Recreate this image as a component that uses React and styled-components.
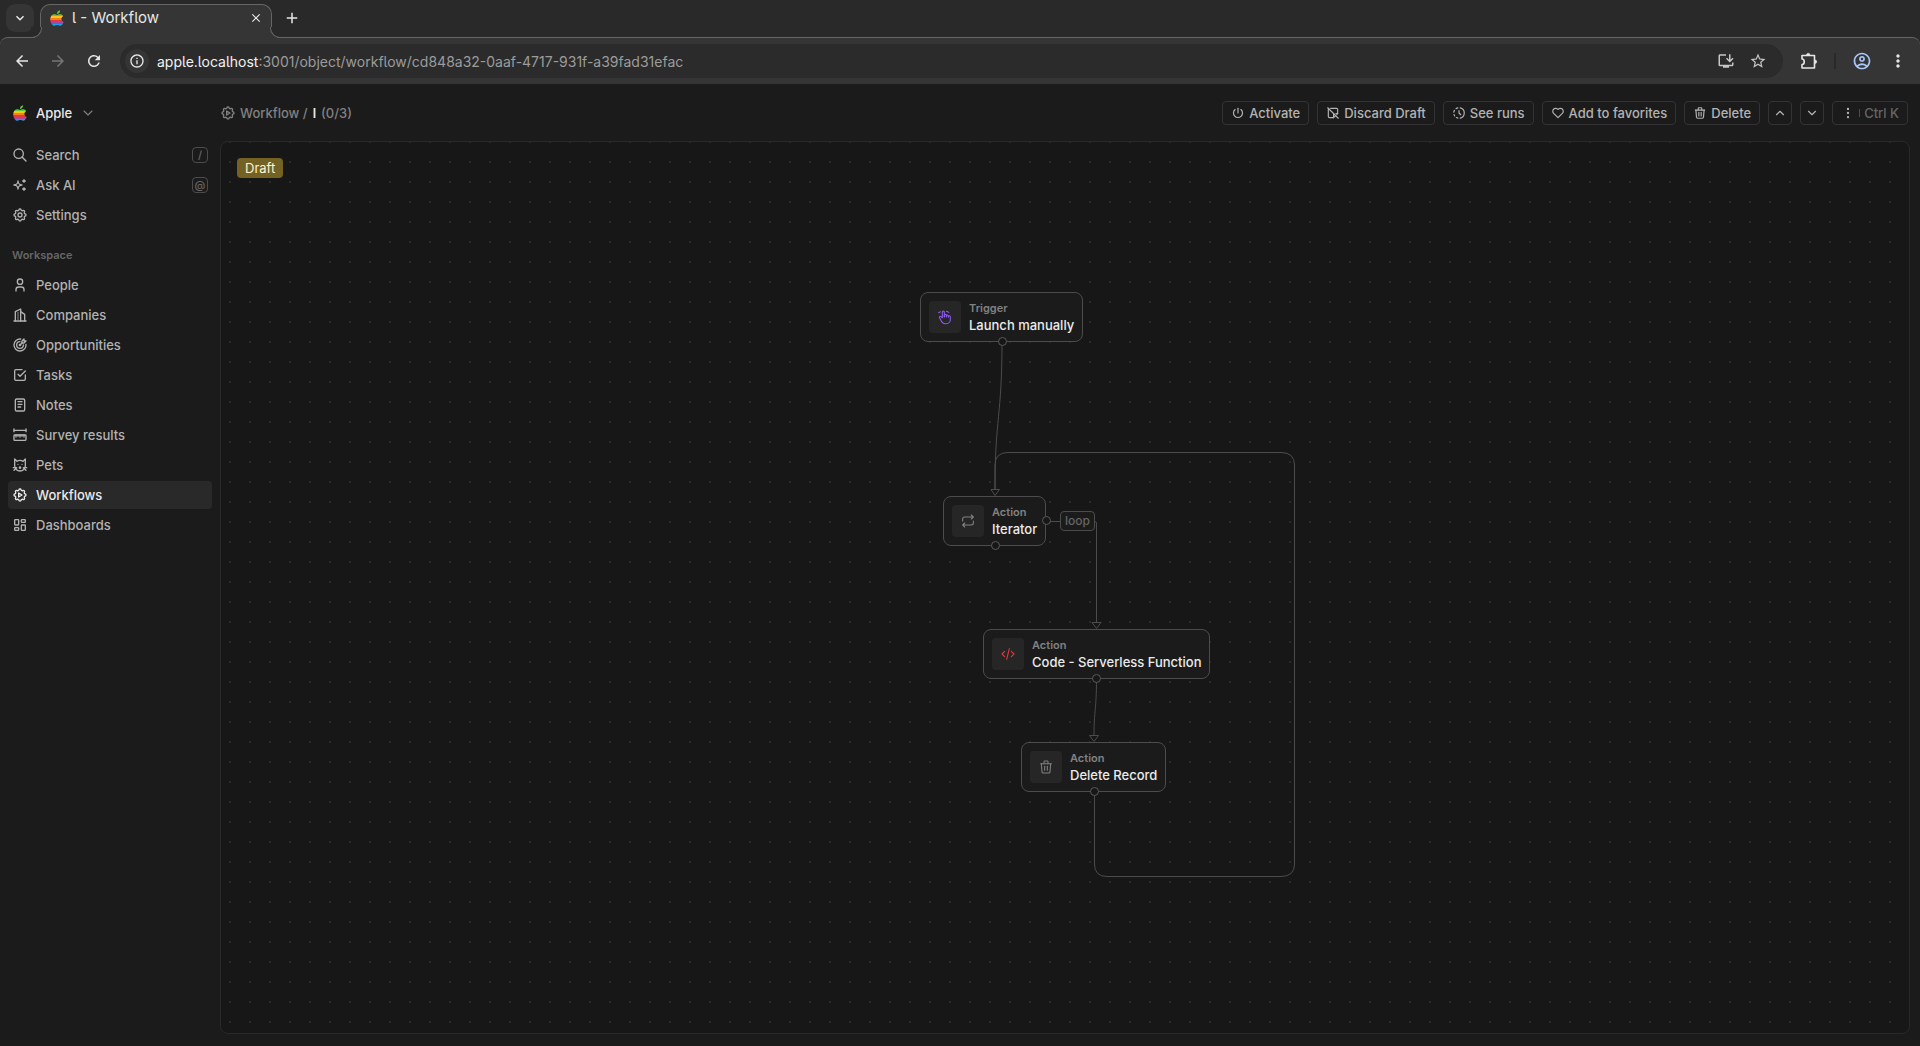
import React from 'react'
import styled, { createGlobalStyle } from 'styled-components'
import {
  TbSearch, TbSparkles, TbSettings, TbUser, TbBuildingSkyscraper, TbTargetArrow, TbCheckbox, TbNotes,
  TbRulerMeasure, TbCat, TbSettingsAutomation, TbLayoutDashboard, TbPower, TbNoteOff, TbHistoryToggle,
  TbHeart, TbTrash, TbChevronUp, TbChevronDown, TbDotsVertical, TbHandMove, TbRepeat, TbCode,
} from 'react-icons/tb'
import {
  MdArrowBack, MdArrowForward, MdRefresh, MdInfoOutline, MdOutlineInstallDesktop, MdStarOutline,
  MdOutlineAccountCircle, MdMoreVert, MdClose, MdAdd, MdKeyboardArrowDown,
} from 'react-icons/md'

const GlobalStyle = createGlobalStyle`
  * {
    box-sizing: border-box;
  }
  body {
    margin: 0;
    background-color: #1b1b1b;
    font-family: Inter, sans-serif;
    color: #b3b3b3;
  }
  button {
    font-family: inherit;
    cursor: pointer;
  }
  svg {
    display: block;
    flex-shrink: 0;
  }
`

const Window = styled.div`
  min-height: 100vh;
  display: flex;
  flex-direction: column;
`

/* browser chrome */
const Chrome = styled.div`
  background-color: #292929;
`

const TabStrip = styled.div`
  display: flex;
  height: 37px;
  padding: 4px 6px 0;
`

const TabSearch = styled.button`
  width: 28px;
  height: 28px;
  margin-right: 6px;
  display: flex;
  align-items: center;
  justify-content: center;
  border: none;
  border-radius: 9px;
  background-color: #353535;
  color: #eee;
`

const Tab = styled.div`
  position: relative;
  width: 232px;
  height: 34px;
  display: flex;
  align-items: center;
  gap: 7px;
  padding: 0 8px 8px;
  background-color: #353535;
  border: 1px solid #666;
  border-bottom: none;
  border-radius: 10px 10px 0 0;
  color: #e6e6e6;
  font-size: 15px;
  font-feature-settings: "cv05";

  &::before,
  &::after {
    content: "";
    position: absolute;
    bottom: 0;
    width: 10px;
    height: 10px;
    background-color: #292929;
    border-bottom: 1px solid #666;
  }
  &::before {
    left: -10px;
    border-right: 1px solid #666;
    border-bottom-right-radius: 10px;
    box-shadow: 4px 4px 0 #353535;
    clip-path: inset(0 -1px 0 0);
  }
  &::after {
    right: -10px;
    border-left: 1px solid #666;
    border-bottom-left-radius: 10px;
    box-shadow: -4px 4px 0 #353535;
    clip-path: inset(0 0 0 -1px);
  }
`

const TabTitle = styled.span`
  flex: 1;
`

const PlainButton = styled.button`
  display: flex;
  align-items: center;
  justify-content: center;
  padding: 0;
  border: none;
  background: none;
  color: ${(props) => props.$color || '#e6e6e6'};
`

const NewTab = styled(PlainButton)`
  width: 28px;
  height: 28px;
  margin-left: 6px;
`

const Toolbar = styled.div`
  display: flex;
  align-items: center;
  height: 47px;
  padding: 0 12px 0 13px;
  border-top: 1px solid #666;
  border-radius: 8px 8px 0 0;
  background-color: #353535;
`

const NavButtons = styled.div`
  display: flex;
  gap: 18px;
  width: 107px;
`

const AddressBar = styled.div`
  flex: 1;
  display: flex;
  align-items: center;
  gap: 8px;
  height: 34px;
  padding: 0 16px 0 5px;
  border-radius: 17px;
  background-color: #2b2b2b;
`

const SiteInfo = styled(PlainButton)`
  width: 24px;
  height: 24px;
  border-radius: 12px;
  background-color: #353535;
`

const UrlText = styled.label`
  flex: 1;
  display: flex;
  align-items: center;
  color: #f2f2f2;
  font-size: 14px;
  font-feature-settings: "cv05";
`

const Url = styled.input`
  flex: 1;
  min-width: 0;
  padding: 0;
  border: none;
  outline: none;
  background: none;
  color: #9c9c9c;
  font: inherit;
  font-feature-settings: "cv05";
`

const PageActions = styled.div`
  display: flex;
  gap: 14px;
`

const ToolbarEnd = styled.div`
  display: flex;
  align-items: center;
  margin-left: 17px;
`

const Separator = styled.div`
  width: 2px;
  height: 16px;
  margin: 0 16px;
  background-color: #292929;
`

const MenuButton = styled(PlainButton)`
  width: 20px;
  margin-left: 16px;
`

/* app */
const Layout = styled.div`
  flex: 1;
  display: flex;
`

const Sidebar = styled.nav`
  width: 204px;
  margin: 0 8px;
  padding-top: 15px;
`

const WorkspaceButton = styled.button`
  display: flex;
  align-items: center;
  gap: 8px;
  height: 28px;
  padding: 0 4px;
  border: none;
  background: none;
  color: #ebebeb;
  font-size: 13px;
  font-weight: 500;
`

const NavList = styled.div`
  display: flex;
  flex-direction: column;
  gap: 2px;
  margin-top: ${(props) => props.$top}px;
`

const NavItem = styled.a`
  display: flex;
  align-items: center;
  gap: 8px;
  height: 28px;
  padding: 0 4px;
  border-radius: 4px;
  background-color: ${(props) => (props.$active ? '#292929' : 'transparent')};
  color: ${(props) => (props.$active ? '#ebebeb' : '#b3b3b3')};
  font-size: 13px;
  font-weight: 500;
  text-decoration: none;
`

const Key = styled.kbd`
  display: flex;
  align-items: center;
  justify-content: center;
  width: 16px;
  height: 16px;
  margin-left: auto;
  border: 1px solid #4c4c4c;
  border-radius: 4px;
  color: #666;
  font-family: inherit;
  font-size: 11px;
`

const SectionTitle = styled.div`
  margin-top: 16px;
  padding: 0 4px;
  color: #666;
  font-size: 11px;
  font-weight: 600;
  line-height: 20px;
`

const Main = styled.main`
  flex: 1;
  min-width: 0;
  display: flex;
  flex-direction: column;
  padding: 0 10px 12px 0;
`

const PageHeader = styled.header`
  display: flex;
  align-items: center;
  justify-content: space-between;
  height: 57px;
  padding-right: 2px;
`

const Breadcrumb = styled.div`
  display: flex;
  align-items: center;
  gap: 4px;
  color: #818181;
  font-size: 13px;
  font-weight: 500;

  b {
    color: #ebebeb;
    font-weight: 600;
    padding: 0 1px;
  }
`

const Actions = styled.div`
  display: flex;
  gap: 8px;
`

const ActionButton = styled.button`
  display: flex;
  align-items: center;
  justify-content: center;
  gap: 4px;
  height: 24px;
  min-width: 24px;
  padding: 0 ${(props) => (props.$square ? 0 : 8)}px;
  border: 1px solid #333;
  border-radius: 4px;
  background: none;
  color: #b3b3b3;
  font-size: 13px;
  font-weight: 500;
`

const Shortcut = styled.span`
  display: flex;
  align-items: center;
  gap: 4px;
  color: #666;

  &::before {
    content: "";
    width: 1px;
    height: 8px;
    background-color: #4c4c4c;
  }
`

const Canvas = styled.section`
  position: relative;
  flex: 1;
  overflow: hidden;
  border: 1px solid #292929;
  border-radius: 8px;
  background-color: #171717;
  background-image: radial-gradient(circle at 10px 10px, #292929 1px, transparent 1px);
  background-size: 20px 20px;
  background-position: -1px 10px;
`

const Status = styled.span`
  position: absolute;
  top: 16px;
  left: 16px;
  height: 20px;
  padding: 0 8px;
  border-radius: 4px;
  background-color: #746224;
  color: #fff5d6;
  font-size: 13px;
  line-height: 20px;
`

/* the flow is centred in the canvas, the nodes are placed in its own coordinates */
const Flow = styled.div`
  position: absolute;
  top: 150px;
  left: calc(50% - 145px);
  width: 376px;
  height: 588px;
`

const Edges = styled.svg`
  position: absolute;
  top: 0;
  left: 0;
  fill: none;
  stroke: #4c4c4c;
`

const Node = styled.div`
  position: absolute;
  left: ${(props) => props.$x}px;
  top: ${(props) => props.$y}px;
  display: flex;
  align-items: center;
  gap: 8px;
  height: 50px;
  padding: 0 8px;
  border: 1px solid #4c4c4c;
  border-radius: 8px;
  background-color: #1b1b1b;
  white-space: nowrap;
`

const NodeIcon = styled.div`
  display: flex;
  align-items: center;
  justify-content: center;
  width: 32px;
  height: 32px;
  border-radius: 4px;
  background-color: #262626;
  color: ${(props) => props.$color};
`

const NodeType = styled.div`
  color: #818181;
  font-size: 11px;
  font-weight: 600;
  line-height: 16px;
`

const NodeName = styled.div`
  color: #ebebeb;
  font-size: 13px;
  font-weight: 500;
  line-height: 18px;
`

const Handle = styled.span`
  position: absolute;
  left: ${(props) => props.$x}px;
  top: ${(props) => props.$y}px;
  width: 9px;
  height: 9px;
  border: 1px solid #5a5a5a;
  border-radius: 50%;
  background-color: #171717;
`

const EdgeLabel = styled.span`
  position: absolute;
  left: ${(props) => props.$x}px;
  top: ${(props) => props.$y}px;
  height: 20px;
  padding: 0 4px;
  border: 1px solid #4c4c4c;
  border-radius: 4px;
  background-color: #1b1b1b;
  color: #666;
  font-size: 12px;
  font-weight: 500;
  line-height: 18px;
`

const AppleLogo = () => (
  <svg width="16" height="16" viewBox="0 0 16 16">
    <clipPath id="apple">
      <path d="M8 5c1-.2 1.800-.8 3-.8 1.500 0 2.600.7 3.200 1.700-2.600 1.500-2.200 5 .5 6-.7 1.900-2 3.800-3.500 3.800-1.100 0-1.600-.6-2.900-.6s-1.900.6-2.900.6C3.200 15.700 1.200 12.500 1.200 9.400c0-3.200 2-5.100 4.200-5.100C6.500 4.300 7.300 5 8 5zM7.900 4C7.700 2.100 9.300.4 11.100.2 11.400 2.200 9.700 3.900 7.900 4z" />
    </clipPath>
    <g clipPath="url(#apple)">
      <rect width="16" height="6" fill="#5fc93c" />
      <rect y="6" width="16" height="2" fill="#fcc419" />
      <rect y="8" width="16" height="2" fill="#f6821f" />
      <rect y="10" width="16" height="2" fill="#e43b3e" />
      <rect y="12" width="16" height="2" fill="#a04aa8" />
      <rect y="14" width="16" height="2" fill="#1c9ee8" />
    </g>
  </svg>
)

const PuzzleIcon = () => (
  <svg width="18" height="18" viewBox="0 0 18 18" fill="none" stroke="currentColor" strokeWidth="1.6" strokeLinejoin="round">
    <path d="M2 3.500H14.500V16H2V12.500C5 12.500 5 7 2 7Z" />
    <path d="M6.500 3A1.700 1.700 0 0 1 10 3ZM15 8A1.700 1.700 0 0 1 15 11.500Z" fill="currentColor" strokeWidth="0.5" />
  </svg>
)

const tools = [
  { label: 'Search', icon: TbSearch, hotkey: '/' },
  { label: 'Ask AI', icon: TbSparkles, hotkey: '@' },
  { label: 'Settings', icon: TbSettings },
]

const objects = [
  { label: 'People', icon: TbUser },
  { label: 'Companies', icon: TbBuildingSkyscraper },
  { label: 'Opportunities', icon: TbTargetArrow },
  { label: 'Tasks', icon: TbCheckbox },
  { label: 'Notes', icon: TbNotes },
  { label: 'Survey results', icon: TbRulerMeasure },
  { label: 'Pets', icon: TbCat },
  { label: 'Workflows', icon: TbSettingsAutomation, active: true },
  { label: 'Dashboards', icon: TbLayoutDashboard },
]

const actions = [
  { label: 'Activate', icon: TbPower },
  { label: 'Discard Draft', icon: TbNoteOff },
  { label: 'See runs', icon: TbHistoryToggle },
  { label: 'Add to favorites', icon: TbHeart },
  { label: 'Delete', icon: TbTrash },
]

const nodes = [
  { type: 'Trigger', name: 'Launch manually', icon: TbHandMove, color: '#8e5cf0', x: 0, y: 0 },
  { type: 'Action', name: 'Iterator', icon: TbRepeat, color: '#818181', x: 23, y: 204 },
  { type: 'Action', name: 'Code - Serverless Function', icon: TbCode, color: '#e5393b', x: 63, y: 337 },
  { type: 'Action', name: 'Delete Record', icon: TbTrash, color: '#818181', x: 101, y: 450 },
]

const handles = [
  { x: 78, y: 45 },
  { x: 71, y: 249 },
  { x: 122, y: 224 },
  { x: 172, y: 382 },
  { x: 170, y: 495 },
]

const NavItems = ({ items }) =>
  items.map(({ label, icon: Icon, hotkey, active }) => (
    <NavItem key={label} href="#" $active={active}>
      <Icon size={16} />
      {label}
      {hotkey && <Key>{hotkey}</Key>}
    </NavItem>
  ))

const Browser = () => (
  <Chrome>
    <TabStrip>
      <TabSearch aria-label="Search tabs"><MdKeyboardArrowDown size={16} /></TabSearch>
      <Tab>
        <AppleLogo />
        <TabTitle>l - Workflow</TabTitle>
        <PlainButton aria-label="Close tab"><MdClose size={14} /></PlainButton>
      </Tab>
      <NewTab aria-label="New tab"><MdAdd size={18} /></NewTab>
    </TabStrip>
    <Toolbar>
      <NavButtons>
        <PlainButton aria-label="Back"><MdArrowBack size={18} /></PlainButton>
        <PlainButton aria-label="Forward" $color="#757575"><MdArrowForward size={18} /></PlainButton>
        <PlainButton aria-label="Reload"><MdRefresh size={18} /></PlainButton>
      </NavButtons>
      <AddressBar>
        <SiteInfo aria-label="Site information"><MdInfoOutline size={16} /></SiteInfo>
        <UrlText>
          apple.localhost
          <Url aria-label="Address" defaultValue=":3001/object/workflow/cd848a32-0aaf-4717-931f-a39fad31efac" />
        </UrlText>
        <PageActions>
          <PlainButton aria-label="Install" $color="#c7c7c7"><MdOutlineInstallDesktop size={18} /></PlainButton>
          <PlainButton aria-label="Bookmark" $color="#c7c7c7"><MdStarOutline size={18} /></PlainButton>
        </PageActions>
      </AddressBar>
      <ToolbarEnd>
        <PlainButton aria-label="Extensions"><PuzzleIcon /></PlainButton>
        <Separator />
        <PlainButton aria-label="Profile" $color="#a8c7fa"><MdOutlineAccountCircle size={20} /></PlainButton>
        <MenuButton aria-label="Menu"><MdMoreVert size={20} /></MenuButton>
      </ToolbarEnd>
    </Toolbar>
  </Chrome>
)

const WorkflowCanvas = () => (
  <Canvas>
    <Status>Draft</Status>
    <Flow>
      <Edges width="376" height="588">
        <path d="M82 50C82 125 75 125 75 197" />
        <path d="M174.500 500V572Q174.500 584.500 187 584.500H361Q374.500 584.500 374.500 572V173Q374.500 160.500 361 160.500H88Q75 160.500 75 173V197" />
        <path d="M126 229.500H174Q176.500 229.500 176.500 231V330" />
        <path d="M176.500 387C176.500 418 174 418 174 443" />
        <path d="M71 197.500H79.500L75 203.500ZM172 330.500H181L176.500 336.500ZM169.500 443.500H178.500L174 449.500Z" />
      </Edges>
      {nodes.map(({ type, name, icon: Icon, color, x, y }) => (
        <Node key={name} $x={x} $y={y}>
          <NodeIcon $color={color}><Icon size={16} strokeWidth={1.6} /></NodeIcon>
          <div>
            <NodeType>{type}</NodeType>
            <NodeName>{name}</NodeName>
          </div>
        </Node>
      ))}
      {handles.map(({ x, y }) => (
        <Handle key={y} $x={x} $y={y} />
      ))}
      <EdgeLabel $x={140} $y={219}>loop</EdgeLabel>
    </Flow>
  </Canvas>
)

const App = () => {
  return (
    <Window>
      <GlobalStyle />
      <Browser />
      <Layout>
        <Sidebar>
          <WorkspaceButton>
            <AppleLogo />
            Apple
            <TbChevronDown size={16} color="#818181" strokeWidth={1.6} />
          </WorkspaceButton>
          <NavList $top={14}><NavItems items={tools} /></NavList>
          <SectionTitle>Workspace</SectionTitle>
          <NavList $top={6}><NavItems items={objects} /></NavList>
        </Sidebar>
        <Main>
          <PageHeader>
            <Breadcrumb>
              <TbSettingsAutomation size={16} />
              Workflow / <b>l</b> (0/3)
            </Breadcrumb>
            <Actions>
              {actions.map(({ label, icon: Icon }) => (
                <ActionButton key={label}>
                  <Icon size={14} />
                  {label}
                </ActionButton>
              ))}
              <ActionButton $square aria-label="Previous record"><TbChevronUp size={14} /></ActionButton>
              <ActionButton $square aria-label="Next record"><TbChevronDown size={14} /></ActionButton>
              <ActionButton>
                <TbDotsVertical size={14} />
                <Shortcut>Ctrl K</Shortcut>
              </ActionButton>
            </Actions>
          </PageHeader>
          <WorkflowCanvas />
        </Main>
      </Layout>
    </Window>
  )
}

export default App
